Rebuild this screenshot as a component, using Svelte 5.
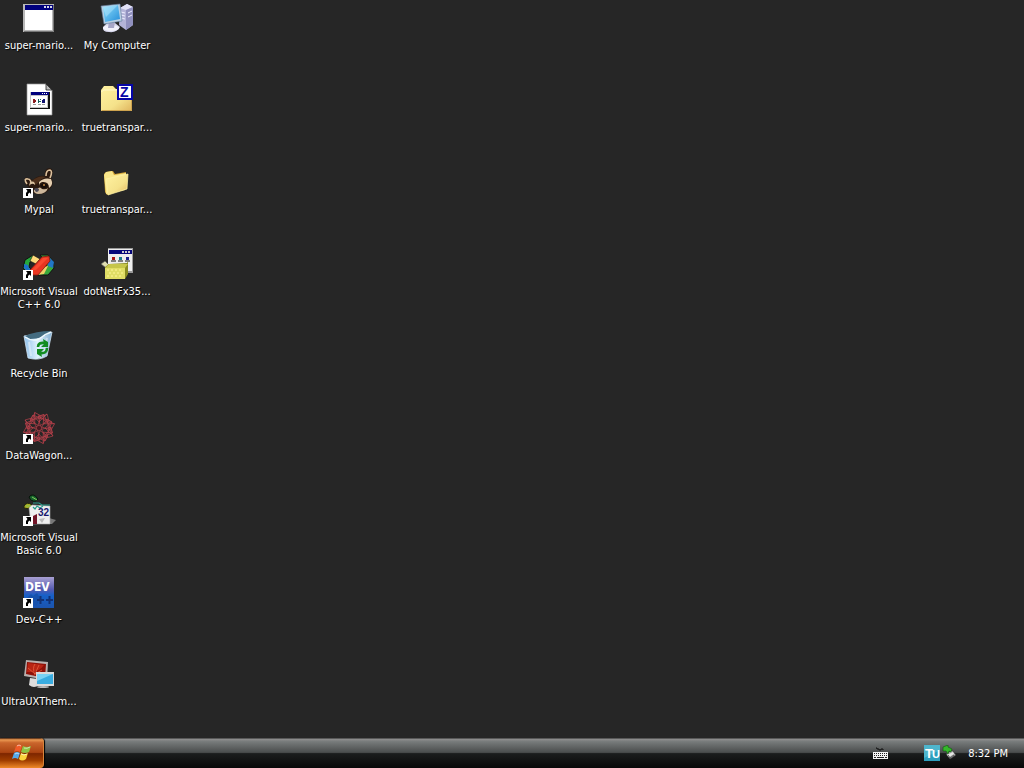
<script lang="ts">
  type Shortcut = { icon: string; label: string; link?: boolean };

  const ROWS = 9;

  // filled top to bottom, then next column
  const shortcuts: Shortcut[] = [
    { icon: 'window', label: 'super-mario...' },
    { icon: 'document', label: 'super-mario...' },
    { icon: 'raccoon', label: 'Mypal', link: true },
    { icon: 'vcpp', label: 'Microsoft Visual\nC++ 6.0', link: true },
    { icon: 'recycle', label: 'Recycle Bin' },
    { icon: 'spiro', label: 'DataWagon...', link: true },
    { icon: 'vb', label: 'Microsoft Visual\nBasic 6.0', link: true },
    { icon: 'devcpp', label: 'Dev-C++', link: true },
    { icon: 'monitors', label: 'UltraUXThem...' },
    { icon: 'computer', label: 'My Computer' },
    { icon: 'zip', label: 'truetranspar...' },
    { icon: 'folder', label: 'truetranspar...' },
    { icon: 'installer', label: 'dotNetFx35...' },
  ];

  const petals = [0, 45, 90, 135, 180, 225, 270, 315];

  let selected = $state(-1);
</script>

<div class="screen">
  <main class="desktop" style="--rows: {ROWS}">
    {#each shortcuts as s, i}
      <button class="shortcut" class:selected={selected === i} onclick={() => (selected = i)}>
        <svg class="icon" viewBox="1 0 32 32" aria-hidden="true">
          {#if s.icon === 'window'}
            <rect x="1" y="2" width="31" height="28" fill="#b8b8b8" />
            <path d="M2 29.5H31.5V3" fill="none" stroke="#777" />
            <rect x="3" y="4" width="27" height="24" fill="#fff" />
            <rect x="3" y="3" width="28" height="5" fill="#00007c" />
            <path d="M22 4h2v2h-2zM25 4h2v2h-2zM28 4h2v2h-2z" fill="#d8d8e8" />
          {:else if s.icon === 'document'}
            <path d="M5 0H24L30 6V31H5Z" fill="#fff" stroke="#999" stroke-width=".7" />
            <path d="M24 0V6H30Z" fill="#bbb" stroke="#222" stroke-width=".8" />
            <rect x="8" y="8" width="20" height="17" fill="#111" />
            <rect x="8" y="8" width="18" height="16" fill="#c4c4c4" />
            <rect x="9" y="12" width="16" height="11" fill="#fff" />
            <rect x="9" y="8" width="18" height="3" fill="#00007c" />
            <path d="M20 9h1v1h-1zM22 9h1v1h-1zM24 9h1v1h-1z" fill="#fff" />
            <path d="M11 15h2v4h-2zM13 16h1v2h-1z" fill="#8c1c20" />
            <path d="M16 15h1v4h-1zM17 17h2v1h-2zM18 15h1v1h-1z" fill="#125c5c" />
            <path d="M20 16h3v3h-3zM21 15h2v1h-2z" fill="#101070" />
            <path d="M11 20.5h3M16 20.5h3M20 20.5h3" stroke="#999" />
          {:else if s.icon === 'raccoon'}
            <path d="M3 15Q2 10 6 12L11 14Q16 9 23 10Q22 2 28 2Q33 4 29 11Q33 18 27 24Q22 29 15 28Q8 27 6 20Q3 19 3 15Z" fill="#2a190f" />
            <path d="M5 18Q1 12 6 13Q8 13 9 16M24 10Q24 4 28 4Q31 5 28 12" fill="none" stroke="#dcc09c" stroke-width="1.6" />
            <path d="M10 15Q16 9 24 11Q18 13 16 17L13 19Z" fill="#4c2f1b" />
            <path d="M17 16Q22 11 29 13Q32 19 27 22Q27 15 20 16Q17 17 17 20Z" fill="#e3cdae" />
            <path d="M8 16Q13 14 13 19Q10 16 7 20Z" fill="#d8bf9d" />
            <path d="M15 23Q18 20 20 23Q24 24 26 22Q24 28 16 28Q11 27 12 24Z" fill="#cdb79b" />
            <path d="M18 19Q22 16 26 19Q25 23 20 22Z" fill="#150c08" />
            <circle cx="22" cy="19" r="1" fill="#c28644" />
            <path d="M12 23Q14 21 17 23Q17 26 14 26Z" fill="#4c4a55" />
          {:else if s.icon === 'vcpp'}
            <path d="M11 7L3 12L1 20L8 27L12 24L7 19L8 14L13 11Z" fill="#26a83c" stroke="#111" />
            <path d="M2 16L6 17L7 20L10 22L7 25L2 20Z" fill="#1c70c8" />
            <path d="M11 7L18 11L14 16L8 13Z" fill="#ffd979" stroke="#111" stroke-width=".6" />
            <path d="M18 7L26 7L31 13L32 20L26 27L15 27L20 21L24 20L25 15Z" fill="#38a93b" stroke="#111" />
            <path d="M26 8L32 14L31 20L26 18L26 14Z" fill="#2277c6" />
            <path d="M20 19L26 18L22 26L15 27Z" fill="#f2cf68" />
            <path d="M8 22L20 9L27 8L28 13L16 27L10 27Z" fill="#ea3520" stroke="#811a10" stroke-width=".8" />
            <path d="M10 22L21 10H26L14 22Z" fill="#fa4930" />
          {:else if s.icon === 'recycle'}
            <path d="M2 6Q10 4 16 5Q24 4 30 2L25 26Q17 31 6 28Z" fill="url(#bin)" stroke="#cfe4f5" stroke-width=".8" />
            <path d="M3 6Q14 1 29 1Q22 9 8 9Z" fill="#436b80" />
            <path d="M3 7Q10 12 17 9Q23 4 29 2" fill="none" stroke="#effaff" stroke-width="1.4" />
            <path d="M7 12L9 26M25 8L22 22" stroke="#fff" stroke-width="2" opacity=".4" />
            <g fill="none" stroke="#128c22" stroke-width="2.6">
              <path d="M16 17Q16 12 23 13M25 18Q25 24 18 23" />
            </g>
            <path d="M21 9L26 12V17H19L22 14ZM20 27L15 24V19H22L19 22Z" fill="#128c22" />
          {:else if s.icon === 'spiro'}
            <g fill="none" stroke="#b8404a" stroke-width=".7">
              {#each petals as angle}
                <path d="M17 14L8 8L11 3L18 6L25 2L27 9L17 14M11 3L17 10L25 2M8 8L20 6L30 10" transform="rotate({angle} 17 16)" />
              {/each}
            </g>
            <circle cx="17" cy="16" r="2" fill="#481820" />
          {:else if s.icon === 'vb'}
            <path d="M7 3Q11 -2 16 5L14 7Q9 8 7 3Z" fill="#17632d" stroke="#051108" />
            <path d="M2 12Q5 7 10 11Q9 16 2 14Z" fill="#a7ac25" stroke="#20260a" />
            <path d="M10 3L15 6M4 12L10 12" stroke="#86c95a" />
            <path d="M27 24L34 26L30 30H22Z" fill="#777" />
            <path d="M7 14L10 11L28 12L28 30H9Z" fill="#eee" stroke="#aaa" stroke-width=".6" />
            <path d="M11 9H17L20 11H28M11 13L13 15L15 12L18 14L21 12" fill="none" stroke="#2a9c8c" stroke-width="1.2" />
            <path d="M11 22L15 20V30H11Z" fill="#721528" />
            <path d="M17 25L23 24L20 29Z" fill="#bbb" />
            <text x="16" y="22" font-size="10">32</text>
          {:else if s.icon === 'devcpp'}
            <rect x="2" y="1" width="30" height="31" fill="url(#dev)" />
            <path d="M3 24L9 18L11 20L15 17L18 22L15 29L9 31Z" fill="#1752ad" />
            <path d="M15 24H22M18.5 20V28M24 24H31M27.5 20V28" stroke="#123276" stroke-width="2" />
            <text class="dev" x="3" y="15" font-size="12">DEV</text>
          {:else if s.icon === 'monitors'}
            <path d="M8 20L16 21L17 27Q12 31 7 27Z" fill="#ddd" />
            <path d="M4 2L26 4L25 22L2 18Z" fill="#b9b0ae" />
            <path d="M5 4L24 6L23 20L4 16Z" fill="#8e1008" />
            <path d="M6 5L22 7Q17 15 5 14Z" fill="#b92514" />
            <path d="M13 6Q10 10 13 17M17 7L13 16L20 12M6 10L13 16" fill="none" stroke="#ef6644" stroke-width=".7" />
            <ellipse cx="21" cy="29" rx="6" ry="1" fill="#bbb" />
            <path d="M14 14H32V28H14Z" fill="#dadada" />
            <path d="M15 16H31V26H15Z" fill="#39ace0" />
            <path d="M15 16H31L15 23Z" fill="#78d2f4" />
          {:else if s.icon === 'computer'}
            <path d="M20 6L27 2L33 5V23L26 28L19 23Z" fill="#b4b4d8" />
            <path d="M20 6L27 2L33 5L26 8Z" fill="#e2e2f7" />
            <path d="M26 8L33 5V23L26 28Z" fill="#9090be" />
            <path d="M21 10L25 11M21 13L25 14M21 16L25 17M28 11L32 9M28 15L32 13" stroke="#ececff" />
            <path d="M8 20L15 21L20 25Q17 31 9 30Q2 30 3 25Z" fill="#d7d7ec" />
            <ellipse cx="11" cy="26" rx="8" ry="3" fill="#f1f1fb" />
            <path d="M9 19L15 20L14 26H8Z" fill="#a6a6c7" />
            <path d="M1 4L20 2L22 19L4 22Z" fill="#b9cfe2" stroke="#607b9a" stroke-width=".6" />
            <path d="M3 5L18 3L20 17L5 20Z" fill="url(#screen)" />
            <path d="M3 5L18 3L6 15Z" fill="#c8f1ff" opacity=".4" />
          {:else if s.icon === 'zip'}
            <path d="M1 6L4 2H13L16 5H32V27H1Z" fill="url(#folder)" />
            <path d="M1 8L4 6H31" fill="none" stroke="#fff8c5" />
            <path d="M1.5 26.5H31.5V15" fill="none" stroke="#cda34e" />
            <rect x="17" y="0" width="16" height="16" fill="#0505a6" />
            <rect x="19" y="2" width="12" height="12" fill="#fff" />
            <text class="zee" x="20" y="13" font-size="14">Z</text>
          {:else if s.icon === 'folder'}
            <path d="M4 8L6 6L13 5L15 8L26 6V22L7 29L5 26Z" fill="#cf9f32" />
            <path d="M4 9L6 6L12 5L14 9L26 7L25 24L6 28Z" fill="#f9e78b" />
            <path d="M6 13L28 8L27 23L8 29Z" fill="url(#folder)" stroke="#fff3a6" stroke-width=".7" />
          {:else if s.icon === 'installer'}
            <rect x="8" y="0" width="25" height="25" fill="#999" />
            <rect x="8" y="1" width="24" height="22" fill="#ededed" />
            <rect x="9" y="2" width="23" height="4" fill="#07077a" />
            <path d="M22 3h2v2h-2zM25 3h2v2h-2zM28 3h2v2h-2z" fill="#ccc" />
            <path d="M12 9h3v3h-3z" fill="#aa1515" />
            <path d="M19 9h3v3h-3z" fill="#1c7c8d" />
            <path d="M26 9h3v3h-3z" fill="#1b208b" />
            <path d="M11 13h5M18 13h5M25 13h5" stroke="#111" />
            <path d="M1 16L5 13L9 17L6 20Z" fill="#deddb0" stroke="#555" stroke-width=".7" />
            <path d="M5 19L9 16L27 15L28 13V26L25 31H5Z" fill="#8b8d21" />
            <path d="M5 20H25V31H5Z" fill="#e0de65" />
            <path d="M5 20L9 16H28L25 20Z" fill="#c6c64b" />
            <path d="M7 22h2M11 22h2M15 22h2M19 22h2M9 25h2M13 25h2M17 25h2M21 25h2M7 28h2M11 28h2M15 28h2M19 28h2" stroke="#fff69b" />
          {/if}

          {#if s.link}
            <rect x="1" y="22" width="10" height="10" fill="#fff" />
            <path d="M4 23H9V28L7.5 26.5L6 28V30H4V27L5.5 25Z" fill="#000" />
          {/if}
        </svg>
        <span class="label">{s.label}</span>
      </button>
    {/each}
  </main>

  <footer class="taskbar">
    <button class="start" aria-label="Start">
      <svg viewBox="0 0 20 18" aria-hidden="true">
        <path d="M4 2Q7 -1 10 2L8 8Q5 6 2 8Z" fill="#ef5b28" />
        <path d="M11 2Q15 4 19 2L17 8Q13 10 9 8Z" fill="#8fc442" />
        <path d="M2 9Q5 7 8 9L6 15Q3 13 0 15Z" fill="#55a9e9" />
        <path d="M9 9Q13 11 16 9L14 15Q10 18 7 15Z" fill="#fbd43b" />
        <path d="M5 2Q7 0 9 2M12 4Q15 5 18 3M3 10Q5 8 7 10M9 10Q12 12 15 10" fill="none" stroke="#fff" opacity=".6" />
      </svg>
    </button>

    <div class="tray">
      <button class="keyboard" aria-label="Language bar">
        <svg viewBox="0 0 16 16" aria-hidden="true">
          <path d="M4 3h1v1h2v1h2V4h2v1" fill="none" stroke="#111" />
          <rect x="1" y="7" width="15" height="7" fill="#f4f4f4" />
          <path d="M2 8.5H15M2 10.5H15" stroke="#222" stroke-dasharray="1 1" />
          <path d="M2 12.5h2M5 12.5h7M13 12.5h2" stroke="#222" />
        </svg>
      </button>
      <button aria-label="TrueTransparency">
        <svg viewBox="0 0 16 16" aria-hidden="true">
          <rect width="16" height="16" fill="#2d9fbe" />
          <path d="M0 0H16V5L0 13Z" fill="#64c5d6" opacity=".6" />
          <text class="tu" x="1" y="13" font-size="13">T</text>
          <text class="tu" x="8" y="13" font-size="11">U</text>
        </svg>
      </button>
      <button aria-label="Safely remove hardware">
        <svg viewBox="0 0 16 16" aria-hidden="true">
          <path d="M4 9L10 5L14 10L8 14Z" fill="#aaa" stroke="#333" stroke-width=".7" />
          <path d="M5 10L11 7L12 9L7 12Z" fill="#e5e5e5" />
          <path d="M6 10L8 13L12 10" fill="none" stroke="#555" />
          <path d="M1 2L6 0L6 2L10 4L9 7L7 6L6 9L4 6L1 6Z" fill="#35b82b" stroke="#12580f" stroke-width=".6" />
        </svg>
      </button>
      <time class="clock">8:32 PM</time>
    </div>
  </footer>
</div>

<!-- shared gradients -->
<svg class="defs" aria-hidden="true">
  <defs>
    <linearGradient id="bin">
      <stop offset="0" stop-color="#8ebfea" />
      <stop offset=".5" stop-color="#e2f4ff" />
      <stop offset="1" stop-color="#80add0" />
    </linearGradient>
    <linearGradient id="dev" x2="0" y2="1">
      <stop offset="0" stop-color="#a9a0d3" />
      <stop offset=".4" stop-color="#555ab0" />
      <stop offset=".6" stop-color="#1660c8" />
      <stop offset="1" stop-color="#1c54ad" />
    </linearGradient>
    <linearGradient id="screen" y2="1">
      <stop offset="0" stop-color="#8edffc" />
      <stop offset="1" stop-color="#268ed9" />
    </linearGradient>
    <linearGradient id="folder" y2="1">
      <stop offset="0" stop-color="#fff2a0" />
      <stop offset=".6" stop-color="#f5e28b" />
      <stop offset="1" stop-color="#dfb45d" />
    </linearGradient>
  </defs>
</svg>

<style>
:global(body) {
  margin: 0;
  background: #262626;
}
.screen {
  display: flex;
  flex-direction: column;
  min-height: 100vh;
  font-family: Tahoma, "DejaVu Sans Condensed", "Noto Sans", sans-serif;
  font-size: 11px;
  line-height: 13px;
  color: #fff;
}
button {
  padding: 0;
  border: 0;
  background: none;
  color: inherit;
  font: inherit;
}
.desktop {
  flex: 1;
  display: grid;
  grid-auto-flow: column;
  grid-template-rows: repeat(var(--rows), 82px);
  grid-auto-columns: 78px;
}
.shortcut {
  display: flex;
  flex-direction: column;
  align-items: center;
  gap: 5px;
  padding-top: 2px;
}
.icon {
  width: 32px;
  height: 32px;
  flex-shrink: 0;
  overflow: visible;
}
.icon text {
  font-family: "Liberation Sans", sans-serif;
  font-weight: bold;
  fill: #17176d;
}
.icon .dev {
  font-family: "DejaVu Sans Condensed", sans-serif;
  fill: #fff;
}
.icon .zee {
  fill: #0505a6;
}
.label {
  text-align: center;
  text-shadow: 1px 1px 1px #000;
  white-space: pre;
}
.selected .label {
  background: #8c3a10;
}
.taskbar {
  display: flex;
  justify-content: space-between;
  height: 30px;
  background: linear-gradient(#333 0, #8e8e8e 4%, #777b7b 12%, #4a4d4d 48%, #1b1d1d 52%, #080808 100%);
}
.start {
  display: flex;
  align-items: center;
  justify-content: center;
  width: 44px;
  border-right: 1px solid #d8843c;
  border-radius: 0 4px 4px 0;
  background: linear-gradient(#402010 0, #ec9a52 6%, #c9652c 16%, #ab4412 48%, #7e2600 52%, #a03e00 75%, #f08a28 100%);
  box-shadow: 1px 0 1px #000;
}
.start svg {
  width: 20px;
  height: 18px;
}
.tray {
  display: flex;
  align-items: center;
  padding-right: 16px;
}
.tray button {
  display: flex;
  margin-right: 2px;
}
.tray .keyboard {
  margin-right: 36px;
}
.tray svg {
  width: 16px;
  height: 16px;
}
.tu {
  font-family: "Liberation Sans", sans-serif;
  font-weight: bold;
  fill: #fff;
}
.clock {
  margin-left: 8px;
}
.defs {
  position: absolute;
  width: 0;
  height: 0;
}
</style>
